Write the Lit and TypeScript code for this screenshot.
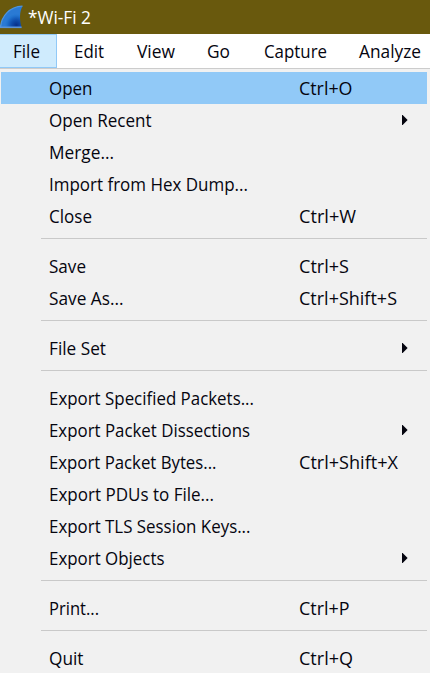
import { LitElement, html, css, svg, nothing } from "lit";
import { customElement } from "lit/decorators.js";
import { classMap } from "lit/directives/class-map.js";

interface Entry {
  label: string;
  width: number;
  keys?: string;
  keysWidth?: number;
  submenu?: boolean;
  active?: boolean;
}

const bar = [
  { label: "File", width: 27, gap: 13 },
  { label: "Edit", width: 30, gap: 34 },
  { label: "View", width: 38, gap: 33 },
  { label: "Go", width: 23, gap: 32 },
  { label: "Capture", width: 63, gap: 34 },
  { label: "Analyze", width: 62, gap: 32 },
];

const groups: Entry[][] = [
  [
    { label: "Open", width: 43.5, keys: "Ctrl+O", keysWidth: 53.5, active: true },
    { label: "Open Recent", width: 102.5, submenu: true },
    { label: "Merge...", width: 65 },
    { label: "Import from Hex Dump...", width: 199 },
    { label: "Close", width: 43, keys: "Ctrl+W", keysWidth: 57 },
  ],
  [
    { label: "Save", width: 37, keys: "Ctrl+S", keysWidth: 50 },
    { label: "Save As...", width: 74.5, keys: "Ctrl+Shift+S", keysWidth: 98 },
  ],
  [{ label: "File Set", width: 57, submenu: true }],
  [
    { label: "Export Specified Packets...", width: 205 },
    { label: "Export Packet Dissections", width: 201, submenu: true },
    { label: "Export Packet Bytes...", width: 167.5, keys: "Ctrl+Shift+X", keysWidth: 99 },
    { label: "Export PDUs to File...", width: 165 },
    { label: "Export TLS Session Keys...", width: 201.5 },
    { label: "Export Objects", width: 115.5, submenu: true },
  ],
  [{ label: "Print...", width: 50, keys: "Ctrl+P", keysWidth: 50.5 }],
  [{ label: "Quit", width: 34.5, keys: "Ctrl+Q", keysWidth: 54 }],
];

@customElement("fitted-text")
class FittedText extends LitElement {
  static properties = { text: {}, width: { type: Number } };
  declare text: string;
  declare width: number;
  static styles = css`
    :host { display: block; height: 24px; }
    svg { display: block; overflow: visible; }
    text {
      font-family: "Open Sans", "Noto Sans", sans-serif;
      font-size: 17.4px;
      fill: currentColor;
    }
  `;
  render() {
    return html`<svg width=${this.width} height="24">
      ${svg`<text x="0" y="19" textLength=${this.width} lengthAdjust="spacingAndGlyphs">${this.text}</text>`}
    </svg>`;
  }
}

@customElement("app-root")
class AppRoot extends LitElement {
  static styles = css`
    :host {
      display: flex;
      flex-direction: column;
      height: 673px;
      overflow: hidden;
      background: #f1f1f1;
      color: #05050f;
    }
    .title {
      flex: none;
      height: 34px;
      display: flex;
      align-items: center;
      gap: 5px;
      background: #69590d;
      color: #fff;
    }
    .fin { display: block; width: 23px; height: 24px; }
    .bar {
      flex: none;
      height: 34px;
      display: flex;
      background: #fff;
      border-bottom: 1px solid #ccc;
    }
    .tab { display: flex; align-items: center; }
    .tab.active {
      box-sizing: border-box;
      width: 57px;
      padding-left: 13px;
      margin-right: -17px;
      background: #cfebfd;
      border: solid #91c9f7;
      border-width: 1px 1px 1px 0;
    }
    .menu { padding: 3px 3px 0 1px; }
    .row {
      height: 32px;
      display: grid;
      grid-template-columns: 250px 103px 1fr;
      align-items: center;
      padding-left: 48px;
    }
    .row.active { background: #91c9f7; }
    .arrow { display: block; width: 6px; height: 10px; grid-column: 3; margin-bottom: 1px; }
    .rule { height: 1px; margin: 6px 0 11px 40px; background: #c9c9c9; }
  `;

  private row(e: Entry) {
    return html`<div class=${classMap({ row: true, active: !!e.active })}>
      <fitted-text .text=${e.label} .width=${e.width}></fitted-text>
      ${e.keys ? html`<fitted-text .text=${e.keys} .width=${e.keysWidth}></fitted-text>` : nothing}
      ${e.submenu
        ? html`<svg class="arrow" viewBox="0 0 6 10"><path d="M0 0H0.6L5.6 5 0.6 10H0Z" fill="#05050f" /></svg>`
        : nothing}
    </div>`;
  }

  render() {
    return html`
      <div class="title">
        <svg class="fin" viewBox="0 0 23 24">
          <defs>
            <radialGradient id="f" cx="0.72" cy="0.88" r="0.52">
              <stop offset="0" stop-color="#06308a" />
              <stop offset="0.45" stop-color="#0f4fae" />
              <stop offset="0.85" stop-color="#2274cf" />
              <stop offset="1" stop-color="#2a7ad4" />
            </radialGradient>
          </defs>
          <path d="M0.5 22.6C1.5 11.5 9 1.8 22.5 1.2C19.4 7 19.4 14 21.6 22.6Z" fill="url(#f)" />
          <path d="M0.5 22.2C1.5 11.5 9 1.8 22.5 1.2" fill="none" stroke="#4c95e0" stroke-width="1.3" />
          <path d="M0 22.3H21.6" fill="none" stroke="#5b93d6" stroke-width="1.6" />
        </svg>
        <fitted-text .text=${"*Wi-Fi 2"} .width=${63}></fitted-text>
      </div>
      <div class="bar">
        ${bar.map(
          (b, i) => html`<div
            class=${classMap({ tab: true, active: i === 0 })}
            style=${i > 0 ? `padding-left:${b.gap}px` : nothing}
          >
            <fitted-text .text=${b.label} .width=${b.width}></fitted-text>
          </div>`
        )}
      </div>
      <div class="menu">
        ${groups.map(
          (g, i) => html`${i ? html`<div class="rule"></div>` : nothing}${g.map((e) => this.row(e))}`
        )}
      </div>
    `;
  }
}
